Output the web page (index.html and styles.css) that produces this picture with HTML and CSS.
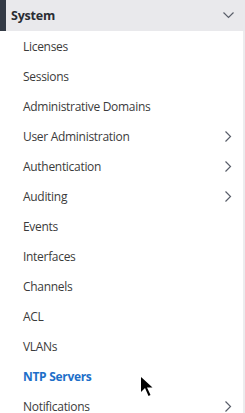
FILE: index.html
```html
<!DOCTYPE html>
<html>
<head>
<meta charset="utf-8">
<link rel="stylesheet" href="styles.css">
</head>
<body>
<nav class="menu">
  <div class="group-head">
    <span class="group-title">System</span>
    <svg class="chev-down" width="11" height="7" viewBox="0 0 11 7"><path d="M0.5 0.5 L5.5 5.5 L10.5 0.5" fill="none" stroke="#5a5f6a" stroke-width="1.2"/></svg>
  </div>
  <ul class="items">
    <li class="item">Licenses</li>
    <li class="item">Sessions</li>
    <li class="item">Administrative Domains</li>
    <li class="item has-sub">User Administration<svg class="chev" width="7" height="11" viewBox="0 0 7 11"><path d="M0.5 0.5 L5.5 5.5 L0.5 10.5" fill="none" stroke="#5a5f6a" stroke-width="1.2"/></svg></li>
    <li class="item has-sub">Authentication<svg class="chev" width="7" height="11" viewBox="0 0 7 11"><path d="M0.5 0.5 L5.5 5.5 L0.5 10.5" fill="none" stroke="#5a5f6a" stroke-width="1.2"/></svg></li>
    <li class="item has-sub">Auditing<svg class="chev" width="7" height="11" viewBox="0 0 7 11"><path d="M0.5 0.5 L5.5 5.5 L0.5 10.5" fill="none" stroke="#5a5f6a" stroke-width="1.2"/></svg></li>
    <li class="item">Events</li>
    <li class="item">Interfaces</li>
    <li class="item">Channels</li>
    <li class="item">ACL</li>
    <li class="item">VLANs</li>
    <li class="item active">NTP Servers</li>
    <li class="item has-sub">Notifications<svg class="chev" width="7" height="11" viewBox="0 0 7 11"><path d="M0.5 0.5 L5.5 5.5 L0.5 10.5" fill="none" stroke="#5a5f6a" stroke-width="1.2"/></svg></li>
  </ul>
  <svg class="cursor" width="14" height="22" viewBox="0 0 14 22"><path d="M0 0 L0 15 L4 11 L7.5 19 L9.5 18 L6 10.5 L11.5 10.5 Z" fill="#000"/></svg>
</nav>
</body>
</html>
```
FILE: styles.css
```css
html, body {
  margin: 0;
  padding: 0;
  background: #fff;
}
body {
  font-family: "Open Sans", "Noto Sans", sans-serif;
  width: 245px;
  height: 413px;
  overflow: hidden;
}
.menu {
  position: relative;
  width: 245px;
  box-sizing: border-box;
  border-right: 2px solid #ececee;
  height: 413px;
}
.group-head {
  height: 31px;
  background: #e9e9ec;
  border-left: 6px solid #343b46;
  display: flex;
  align-items: center;
  justify-content: space-between;
  padding: 0 11px 0 5px;
  margin-right: -2px;
}
.group-title {
  font-size: 12.5px;
  font-weight: 700;
  color: #2a2d33;
  letter-spacing: -0.2px;
}
.chev-down {
  display: block;
}
.items {
  list-style: none;
  margin: 0;
  padding: 0;
}
.item {
  height: 30px;
  display: flex;
  align-items: center;
  justify-content: space-between;
  padding: 0 11px 0 23px;
  font-size: 12px;
  color: #3b3b3b;
  letter-spacing: -0.3px;
}
.item.active {
  color: #1d6fc9;
  font-weight: 700;
}
.chev {
  display: block;
}
.cursor {
  position: absolute;
  left: 141px;
  top: 377px;
}
```
